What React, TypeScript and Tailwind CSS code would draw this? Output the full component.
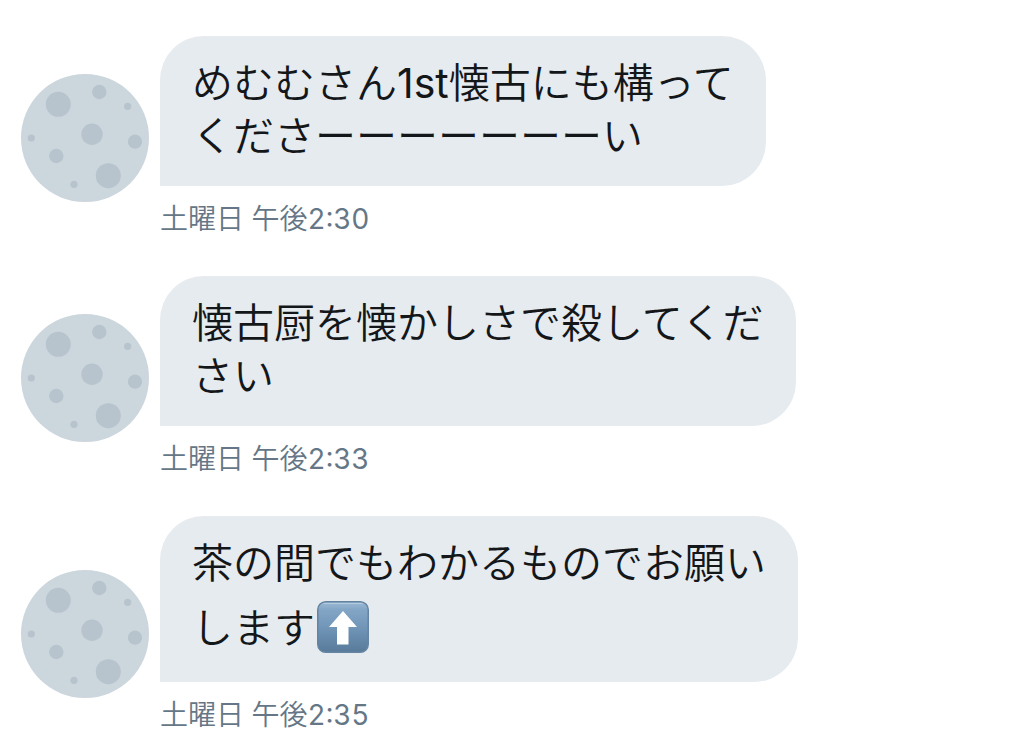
import React from "react";

interface Message {
  id: number;
  lines: string[];
  arrow?: boolean;
  time: string;
}

const messages: Message[] = [
  { id: 1, lines: ["めむむさん1st懐古にも構って", "くださーーーーーーーい"], time: "土曜日 午後2:30" },
  { id: 2, lines: ["懐古厨を懐かしさで殺してくだ", "さい"], time: "土曜日 午後2:33" },
  { id: 3, lines: ["茶の間でもわかるものでお願い", "します"], arrow: true, time: "土曜日 午後2:35" },
];

// latin runs need a heavier weight than the kana around them
const MixedText: React.FC<{ text: string }> = ({ text }) => (
  <>
    {text.split(/([0-9a-z:]+)/i).map((part, i) =>
      i % 2 === 1 ? (
        <span key={i} className="font-normal">{part}</span>
      ) : (
        part
      )
    )}
  </>
);

const MoonAvatar = () => (
  <svg viewBox="0 0 128 128" className="size-32 shrink-0" role="img" aria-label="アイコン">
    <circle cx="64" cy="64" r="64" fill="#ccd6dd" />
    <g fill="#b7c4cd">
      <circle cx="37.3" cy="30.3" r="12.5" />
      <circle cx="78.3" cy="18" r="7.2" />
      <circle cx="106.7" cy="32.3" r="3.6" />
      <circle cx="71" cy="60.3" r="10.7" />
      <circle cx="114" cy="67.7" r="7.1" />
      <circle cx="10.3" cy="64" r="3.6" />
      <circle cx="35.3" cy="82" r="7.2" />
      <circle cx="87.3" cy="101.7" r="12.5" />
      <circle cx="53" cy="110.3" r="3.6" />
    </g>
  </svg>
);

const UpArrow = () => (
  <svg viewBox="0 0 52 52" className="mt-[11px] mb-1.5 ml-0.5 inline-block size-13 align-[-16px]" role="img" aria-label="上矢印">
    <defs>
      <linearGradient id="key" x1="0" y1="0" x2="0" y2="1">
        <stop offset="0" stopColor="#9dbad5" />
        <stop offset="0.15" stopColor="#84a6c6" />
        <stop offset="0.5" stopColor="#7196b8" />
        <stop offset="1" stopColor="#587a9a" />
      </linearGradient>
    </defs>
    <rect x="0.75" y="0.75" width="50.5" height="50.5" rx="8" fill="url(#key)" stroke="#6484a2" strokeWidth="1.5" />
    <path d="M7 2.5H45" stroke="#b4cce0" strokeWidth="1.2" strokeLinecap="round" />
    <path d="M26 10L40 26H31.5V43.5H20V26H12Z" fill="#fff" />
  </svg>
);

const MessageRow: React.FC<{ message: Message }> = ({ message }) => {
  return (
    <li className="flex items-end gap-[11px]">
      <div className="mb-[38px] shrink-0">
        <MoonAvatar />
      </div>
      <div className="flex min-w-0 flex-col items-start">
        <p className="rounded-[44px] rounded-bl-none bg-[#e6ebef] px-8 pt-[21px] pb-[23px] text-[41px] leading-[53px] font-[350] text-[#14171a]">
          {message.lines.map((line, i) => (
            <React.Fragment key={i}>
              {i > 0 && <br />}
              <MixedText text={line} />
            </React.Fragment>
          ))}
          {message.arrow && <UpArrow />}
        </p>
        <time className="mt-3 text-[28px] leading-[42px] font-[350] text-[#657786] tabular-nums">
          <MixedText text={message.time} />
        </time>
      </div>
    </li>
  );
};

const App = () => {
  return (
    <main
      lang="ja"
      className="min-h-screen bg-white pt-9 pl-[21px] font-[Inter,'Noto_Sans_CJK_JP',sans-serif]"
    >
      <ul className="flex flex-col gap-9">
        {messages.map((message) => (
          <MessageRow key={message.id} message={message} />
        ))}
      </ul>
    </main>
  );
};

export default App;
